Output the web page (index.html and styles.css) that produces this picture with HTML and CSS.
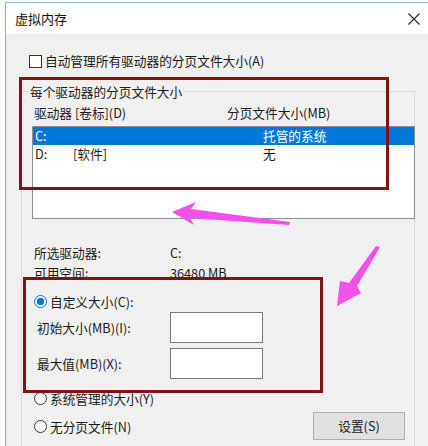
FILE: index.html
```html
<!DOCTYPE html>
<html>
    <head>
        <title>虚拟内存</title>
        <link rel="stylesheet" href="styles.css">
    </head>
    <body>
        <div class="window">
            <div class="titlebar">
                <span class="title">虚拟内存</span>
                <svg class="close" width="12" height="12" viewBox="0 0 12 12">
                    <path d="M0.5 0.5 L11.5 11.5 M11.5 0.5 L0.5 11.5" stroke="#222" stroke-width="1.1" fill="none"/>
                </svg>
            </div>

            <div class="auto">
                <span class="checkbox"></span>
                <span>自动管理所有驱动器的分页文件大小(A)</span>
            </div>

            <div class="group">
                <div class="group_title">每个驱动器的分页文件大小</div>
                <div class="cols">
                    <span class="col_drive">驱动器 [卷标](D)</span>
                    <span>分页文件大小(MB)</span>
                </div>
                <ul class="drives">
                    <li class="selected">
                        <span class="d_name">C:</span>
                        <span class="d_label"></span>
                        <span>托管的系统</span>
                    </li>
                    <li>
                        <span class="d_name">D:</span>
                        <span class="d_label">[软件]</span>
                        <span>无</span>
                    </li>
                </ul>

                <div class="info">
                    <div class="info_row"><span class="info_key">所选驱动器:</span><span>C:</span></div>
                    <div class="info_row"><span class="info_key">可用空间:</span><span>36480 MB</span></div>
                </div>

                <div class="radio_row custom">
                    <span class="radio checked"></span>
                    <span>自定义大小(C):</span>
                </div>
                <div class="size_row first">
                    <span class="size_key">初始大小(MB)(I):</span>
                    <span class="textbox"></span>
                </div>
                <div class="size_row">
                    <span class="size_key">最大值(MB)(X):</span>
                    <span class="textbox"></span>
                </div>
                <div class="radio_row system">
                    <span class="radio"></span>
                    <span>系统管理的大小(Y)</span>
                </div>
                <div class="last_row">
                    <div class="radio_row">
                        <span class="radio"></span>
                        <span>无分页文件(N)</span>
                    </div>
                    <div class="button">设置(S)</div>
                </div>
            </div>
        </div>

        <!-- annotations drawn over the screenshot -->
        <div class="mark mark_list"></div>
        <div class="mark mark_custom"></div>
        <svg class="arrows" width="428" height="446" viewBox="0 0 428 446">
            <polygon points="172,212 196,202 191,209 290,222 289,225 190,218 194,225" fill="#f34fe9"/>
            <polygon points="376,246 380,247 357,286 361,293 337,306 340,281 349,283" fill="#f34fe9"/>
        </svg>
    </body>
</html>
```

FILE: styles.css
```css
*{
margin: 0;
padding: 0;
box-sizing: border-box;
}
body{
background: #fff;
font-family: "Noto Sans CJK SC", "Liberation Sans", sans-serif;
font-size: 12.7px;
color: #1b1b1b;
overflow: hidden;
}
.window{
margin: 2px 0 0 5px;
height: 444px;
border-top: 1px solid #a3bddd;
border-left: 1px solid #8eaad0;
background: #f0f0f0;
overflow: hidden;
}
.titlebar{
height: 31px;
background: #fff;
display: flex;
align-items: center;
justify-content: space-between;
padding: 0 8px 0 9px;
}
.title{
font-size: 13px;
color: #111;
}
.auto{
display: flex;
align-items: center;
gap: 3px;
height: 14px;
margin: 20px 0 0 23px;
line-height: 14px;
}
.checkbox{
width: 13px;
height: 13px;
border: 1px solid #333;
background: #fff;
}
.group{
margin: 23px 13px 0 15px;
border: 1px solid #dcdcdc;
border-bottom: none;
height: 400px;
}
.group_title{
width: fit-content;
margin: -9px 0 0 7px;
padding: 0 1px;
line-height: 17px;
background: #f0f0f0;
}
.cols{
display: flex;
margin-top: 4px;
padding-left: 12px;
line-height: 17px;
}
.col_drive{
width: 193px;
}
.drives{
list-style: none;
height: 93px;
margin: 5px -1px 0 10px;
border: 1px solid #8a8e96;
background: #fff;
}
.drives li{
display: flex;
height: 18px;
line-height: 18px;
padding-left: 2px;
}
.drives li.selected{
background: #0078d7;
color: #fff;
}
.d_name{
width: 38px;
}
.d_label{
width: 190px;
}
.info{
margin-top: 24px;
padding-left: 12px;
}
.info_row{
display: flex;
height: 20px;
line-height: 20px;
}
.info_key{
width: 136px;
}
.radio_row{
display: flex;
align-items: center;
gap: 3px;
height: 18px;
padding-left: 12px;
}
.radio_row.custom{
margin-top: 9px;
}
.radio_row.system{
margin-top: 10px;
}
.radio{
width: 13px;
height: 13px;
border: 1px solid #333;
border-radius: 50%;
background: #fff;
}
.radio.checked{
border-color: #0078d7;
background: radial-gradient(circle, #0078d7 0 3.5px, #fff 4px);
}
.size_row{
display: flex;
align-items: center;
height: 31px;
margin-top: 5px;
padding-left: 15px;
}
.size_row.first{
margin-top: 2px;
}
.size_key{
width: 133px;
}
.textbox{
width: 93px;
height: 31px;
border: 1px solid #7a7a7a;
background: #fff;
}
.last_row{
display: flex;
align-items: center;
justify-content: space-between;
height: 28px;
margin-top: 5px;
padding-right: 9px;
}
.last_row .radio_row{
padding-left: 12px;
}
.button{
width: 92px;
height: 28px;
line-height: 26px;
text-align: center;
border: 1px solid #adadad;
background: #e1e1e1;
}
.mark{
position: absolute;
border: 3px solid #7e1414;
}
.mark_list{
left: 19px;
top: 77px;
width: 370px;
height: 113px;
}
.mark_custom{
left: 23px;
top: 277px;
width: 300px;
height: 116px;
}
.arrows{
position: absolute;
left: 0;
top: 0;
pointer-events: none;
}
```
